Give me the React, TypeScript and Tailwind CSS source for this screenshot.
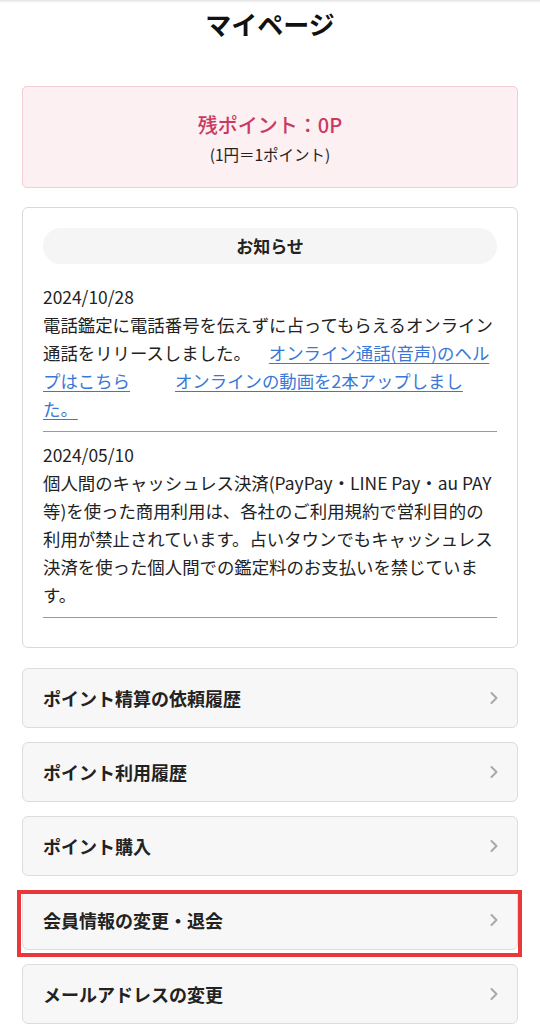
const menuItems = [
  "ポイント精算の依頼履歴",
  "ポイント利用履歴",
  "ポイント購入",
  "会員情報の変更・退会",
  "メールアドレスの変更",
];

function Chevron() {
  return (
    <svg width="10" height="14" viewBox="0 0 10 14" fill="none" className="shrink-0">
      <polyline points="2.5,2 7.5,7 2.5,12" stroke="#a8a8a8" strokeWidth="2" strokeLinecap="round" strokeLinejoin="round" />
    </svg>
  );
}

function MenuCard({ label, highlighted }: { label: string; highlighted?: boolean }) {
  return (
    <div className="relative">
      <a
        href="#"
        className="flex h-[60px] items-center justify-between rounded-[6px] border border-[#dcdcdc] bg-[#f7f7f7] pl-[20px] pr-[18px]"
      >
        <span className="text-[18px] font-bold text-[#222]">{label}</span>
        <Chevron />
      </a>
      {highlighted && (
        <div className="pointer-events-none absolute -left-[5px] -right-[4px] top-0 -bottom-[7px] border-[4px] border-[#e8383b]"></div>
      )}
    </div>
  );
}

export default function App() {
  return (
    <div
      className="min-h-[1024px] bg-white text-[#222]"
      style={{ fontFamily: '"Noto Sans CJK JP", "Noto Sans", sans-serif' }}
    >
      <div className="h-[3px] bg-gradient-to-b from-[#e2e2e2] to-white"></div>
      <h1 className="mt-[3px] text-center text-[26px] font-bold leading-[36px] text-[#111]">マイページ</h1>

      <div className="px-[22px] pt-[44px]">
        <div className="rounded-[5px] border border-[#f5cbd4] bg-[#fcf0f2] pt-[23px] pb-[21px] text-center">
          <p className="text-[20px] font-medium leading-[30px] text-[#c93962]">残ポイント：0P</p>
          <p className="mt-[2px] text-[15.5px] leading-[24px] text-[#222]">(1円＝1ポイント)</p>
        </div>

        <div className="mt-[19px] rounded-[6px] border border-[#d9d9d9] bg-white px-[20px] pt-[20px] pb-[29px]">
          <div className="flex h-[36px] items-center justify-center rounded-full bg-[#f5f5f5]">
            <span className="text-[17px] font-bold text-[#222]">お知らせ</span>
          </div>

          <div className="mt-[19px] border-b border-[#9a9a9a] pb-[8px] text-[17.4px] leading-[28px]">
            <p>2024/10/28</p>
            <p>
              電話鑑定に電話番号を伝えずに占ってもらえるオンライン通話をリリースしました。
              <a href="#" className="ml-[18px] text-[#3a78d6] underline underline-offset-[3px]">
                オンライン通話(音声)のヘルプはこちら
              </a>
              <a href="#" className="ml-[45px] text-[#3a78d6] underline underline-offset-[3px]">
                オンラインの動画を2本アップしました。
              </a>
            </p>
          </div>

          <div className="border-b border-[#9a9a9a] pt-[9px] pb-[8px] text-[17.4px] leading-[28px]">
            <p>2024/05/10</p>
            <p>
              個人間のキャッシュレス決済(PayPay・LINE Pay・au PAY等)を使った商用利用は、各社のご利用規約で営利目的の利用が禁止されています。占いタウンでもキャッシュレス決済を使った個人間での鑑定料のお支払いを禁じています。
            </p>
          </div>
        </div>

        <div className="mt-[20px] flex flex-col gap-[14px]">
          {menuItems.map((label, i) => (
            <MenuCard key={label} label={label} highlighted={i === 3} />
          ))}
        </div>
      </div>
    </div>
  );
}
